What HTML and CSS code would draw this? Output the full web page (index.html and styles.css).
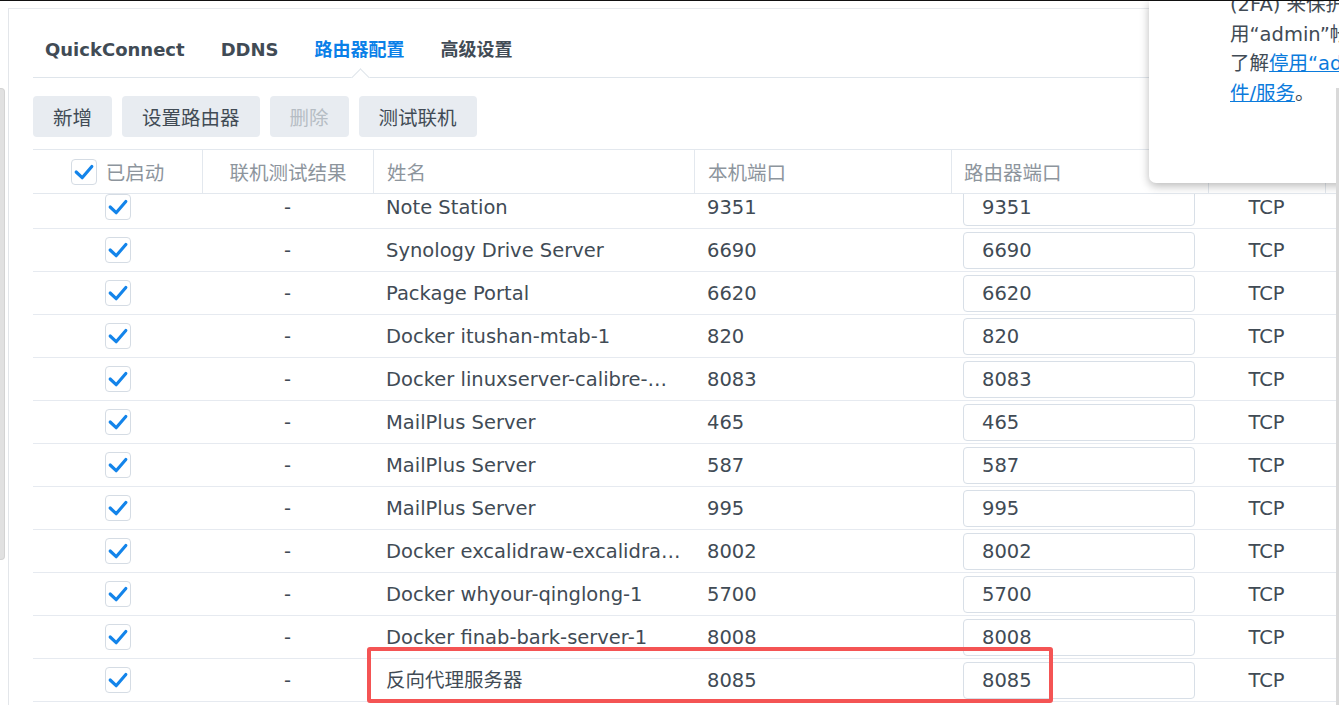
FILE: index.html
```html
<!DOCTYPE html>
<html>
<head>
<meta charset="UTF-8">
<title>路由器配置</title>
<link rel="stylesheet" href="styles.css">
</head>
<body>

<div class="topline"></div>

<div class="screen">
  <div class="rail"><div class="rail-thumb"></div></div>

  <div class="panel">
    <nav class="tabs">
      <span class="tab">QuickConnect</span>
      <span class="tab">DDNS</span>
      <span class="tab active">路由器配置<i class="caret"></i></span>
      <span class="tab">高级设置</span>
    </nav>

    <div class="toolbar">
      <button class="btn">新增</button>
      <button class="btn">设置路由器</button>
      <button class="btn off">删除</button>
      <button class="btn">测试联机</button>
    </div>

    <div class="grid">
      <div class="row head">
        <div class="c c-on"><span class="cb"><svg viewBox="0 0 26 26"><path d="M4.5 13l6.5 6.2L21.5 7"/></svg></span><span>已启动</span></div>
        <div class="c c-mid">联机测试结果</div>
        <div class="c c-name">姓名</div>
        <div class="c c-port">本机端口</div>
        <div class="c c-rport">路由器端口</div>
        <div class="c c-mid">协议</div>
        <div class="c"></div>
      </div>

      <div class="body">
        <div class="body-scroll">
          <div class="row"><div class="c c-mid"><span class="cb"><svg viewBox="0 0 26 26"><path d="M4.5 13l6.5 6.2L21.5 7"/></svg></span></div><div class="c c-mid">-</div><div class="c c-name">Note Station</div><div class="c c-port">9351</div><div class="c c-rport"><input class="field" value="9351"></div><div class="c c-mid">TCP</div><div class="c"></div></div>
          <div class="row"><div class="c c-mid"><span class="cb"><svg viewBox="0 0 26 26"><path d="M4.5 13l6.5 6.2L21.5 7"/></svg></span></div><div class="c c-mid">-</div><div class="c c-name">Synology Drive Server</div><div class="c c-port">6690</div><div class="c c-rport"><input class="field" value="6690"></div><div class="c c-mid">TCP</div><div class="c"></div></div>
          <div class="row"><div class="c c-mid"><span class="cb"><svg viewBox="0 0 26 26"><path d="M4.5 13l6.5 6.2L21.5 7"/></svg></span></div><div class="c c-mid">-</div><div class="c c-name">Package Portal</div><div class="c c-port">6620</div><div class="c c-rport"><input class="field" value="6620"></div><div class="c c-mid">TCP</div><div class="c"></div></div>
          <div class="row"><div class="c c-mid"><span class="cb"><svg viewBox="0 0 26 26"><path d="M4.5 13l6.5 6.2L21.5 7"/></svg></span></div><div class="c c-mid">-</div><div class="c c-name">Docker itushan-mtab-1</div><div class="c c-port">820</div><div class="c c-rport"><input class="field" value="820"></div><div class="c c-mid">TCP</div><div class="c"></div></div>
          <div class="row"><div class="c c-mid"><span class="cb"><svg viewBox="0 0 26 26"><path d="M4.5 13l6.5 6.2L21.5 7"/></svg></span></div><div class="c c-mid">-</div><div class="c c-name">Docker linuxserver-calibre-web-1</div><div class="c c-port">8083</div><div class="c c-rport"><input class="field" value="8083"></div><div class="c c-mid">TCP</div><div class="c"></div></div>
          <div class="row"><div class="c c-mid"><span class="cb"><svg viewBox="0 0 26 26"><path d="M4.5 13l6.5 6.2L21.5 7"/></svg></span></div><div class="c c-mid">-</div><div class="c c-name">MailPlus Server</div><div class="c c-port">465</div><div class="c c-rport"><input class="field" value="465"></div><div class="c c-mid">TCP</div><div class="c"></div></div>
          <div class="row"><div class="c c-mid"><span class="cb"><svg viewBox="0 0 26 26"><path d="M4.5 13l6.5 6.2L21.5 7"/></svg></span></div><div class="c c-mid">-</div><div class="c c-name">MailPlus Server</div><div class="c c-port">587</div><div class="c c-rport"><input class="field" value="587"></div><div class="c c-mid">TCP</div><div class="c"></div></div>
          <div class="row"><div class="c c-mid"><span class="cb"><svg viewBox="0 0 26 26"><path d="M4.5 13l6.5 6.2L21.5 7"/></svg></span></div><div class="c c-mid">-</div><div class="c c-name">MailPlus Server</div><div class="c c-port">995</div><div class="c c-rport"><input class="field" value="995"></div><div class="c c-mid">TCP</div><div class="c"></div></div>
          <div class="row"><div class="c c-mid"><span class="cb"><svg viewBox="0 0 26 26"><path d="M4.5 13l6.5 6.2L21.5 7"/></svg></span></div><div class="c c-mid">-</div><div class="c c-name">Docker excalidraw-excalidraw-1</div><div class="c c-port">8002</div><div class="c c-rport"><input class="field" value="8002"></div><div class="c c-mid">TCP</div><div class="c"></div></div>
          <div class="row"><div class="c c-mid"><span class="cb"><svg viewBox="0 0 26 26"><path d="M4.5 13l6.5 6.2L21.5 7"/></svg></span></div><div class="c c-mid">-</div><div class="c c-name">Docker whyour-qinglong-1</div><div class="c c-port">5700</div><div class="c c-rport"><input class="field" value="5700"></div><div class="c c-mid">TCP</div><div class="c"></div></div>
          <div class="row"><div class="c c-mid"><span class="cb"><svg viewBox="0 0 26 26"><path d="M4.5 13l6.5 6.2L21.5 7"/></svg></span></div><div class="c c-mid">-</div><div class="c c-name">Docker finab-bark-server-1</div><div class="c c-port">8008</div><div class="c c-rport"><input class="field" value="8008"></div><div class="c c-mid">TCP</div><div class="c"></div></div>
          <div class="row marked"><div class="c c-mid"><span class="cb"><svg viewBox="0 0 26 26"><path d="M4.5 13l6.5 6.2L21.5 7"/></svg></span></div><div class="c c-mid">-</div><div class="c c-name">反向代理服务器</div><div class="c c-port">8085</div><div class="c c-rport"><input class="field" value="8085"></div><div class="c c-mid">TCP</div><div class="c"></div><i class="redbox"></i></div>
        </div>
      </div>
    </div>
  </div>
</div>

<div class="popover">
  <p>(2FA) 来保护您的帐户安全</p>
  <p>用“admin”帐户登录时</p>
  <p>了解<a href="#">停用“admin”帐户对套</a></p>
  <p><a href="#">件/服务</a>。</p>
</div>

<div class="vbar"></div>

</body>
</html>
```

FILE: styles.css
```css
html, body { margin:0; overflow:hidden; height:100%; }
body { background:#fff; color:#414b55; font-family:"DejaVu Sans", "Noto Sans CJK SC", sans-serif; font-size:19.5px; }

.topline { position:absolute; left:0; right:0; top:0; height:1px; background:#111; z-index:3; }

.screen { display:flex; height:100%; }
.rail { width:8px; flex:none; }
.rail-thumb { margin-top:88px; width:5px; height:472px; background:#e1e1e1; border:1px solid #d3d3d3; border-left:none; border-radius:0 4px 4px 0; box-sizing:border-box; }

.panel { flex:1; margin-top:8px; border-top:1px solid #e6e9ed; border-left:1px solid #e3e6ea; padding-left:24px; min-width:0; }

.tabs { display:flex; gap:36px; padding:27px 0 0 12px; border-bottom:1px solid #dfe5eb; }
.tab { position:relative; font-size:18px; font-weight:bold; line-height:28px; padding-bottom:13px; color:#414b55; }
.tab.active { color:#0a80e8; }
.caret { position:absolute; left:calc(50% - 6px); bottom:-7px; width:12px; height:12px; background:#fff;
  border-left:1px solid #dfe5eb; border-top:1px solid #dfe5eb; transform:rotate(45deg); }

.toolbar { display:flex; gap:10px; margin:18px 0 12px; }
.btn { height:41px; padding:0 20px; border:none; border-radius:4px; background:#e8ecf1; color:#414b55;
  font:inherit; }
.btn.off { color:#b6bdc4; }

.grid { border-top:1px solid #e3e8ee; }
.row { display:grid; grid-template-columns:169px 171px 321px 257px 257px 117px 1fr; height:43px;
  border-bottom:1px solid #e6eaf0; box-sizing:border-box; position:relative; }
.c { display:flex; align-items:center; min-width:0; box-sizing:border-box; white-space:nowrap; }
.c-mid { justify-content:center; }
.c-name { padding:0 13px; }
.c-port { padding-left:13px; }
.c-rport { padding-left:12px; }
.body .c-name, .body .c-port { display:block; overflow:hidden; text-overflow:ellipsis; line-height:42px; padding-top:1px; }

.head { height:44px; border-bottom:1px solid #e3e8ee; color:#8d959d; }
.head .c + .c { border-left:1px solid #e3e8ee; }
.head .c-on { justify-content:center; gap:9px; }

.body { height:520px; overflow:hidden; }
.body-scroll { margin-top:-8px; }

.cb { width:26px; height:26px; border:1px solid #d5dce4; border-radius:4px; background:#fff; box-sizing:border-box; display:inline-flex; }
.cb svg { width:24px; height:24px; fill:none; stroke:#1384ea; stroke-width:3.4; stroke-linecap:round; stroke-linejoin:round; }

.field { width:232px; height:37px; box-sizing:border-box; border:1px solid #d8dfe7; border-radius:4px;
  padding:0 0 0 18px; font:inherit; color:#414b55; background:#fff; outline:none; }

.redbox { position:absolute; left:334px; top:-12px; width:686px; height:56px; box-sizing:border-box;
  border:4px solid #f45454; border-radius:3px; }

.popover { position:absolute; left:1149px; top:1px; width:260px; padding:0 0 75px 81px; background:#fff;
  border-radius:0 0 0 7px; box-shadow:0 3px 10px rgba(0,0,0,.28); white-space:nowrap; overflow:hidden; z-index:2; }
.popover p { margin:0; line-height:29.5px; }
.popover p:first-child { margin-top:-11px; }
.popover a { color:#0b7bdc; text-decoration:underline; }

.vbar { position:absolute; right:0; top:88px; bottom:0; width:3px; background:#d9d9d9; z-index:3; }
```
